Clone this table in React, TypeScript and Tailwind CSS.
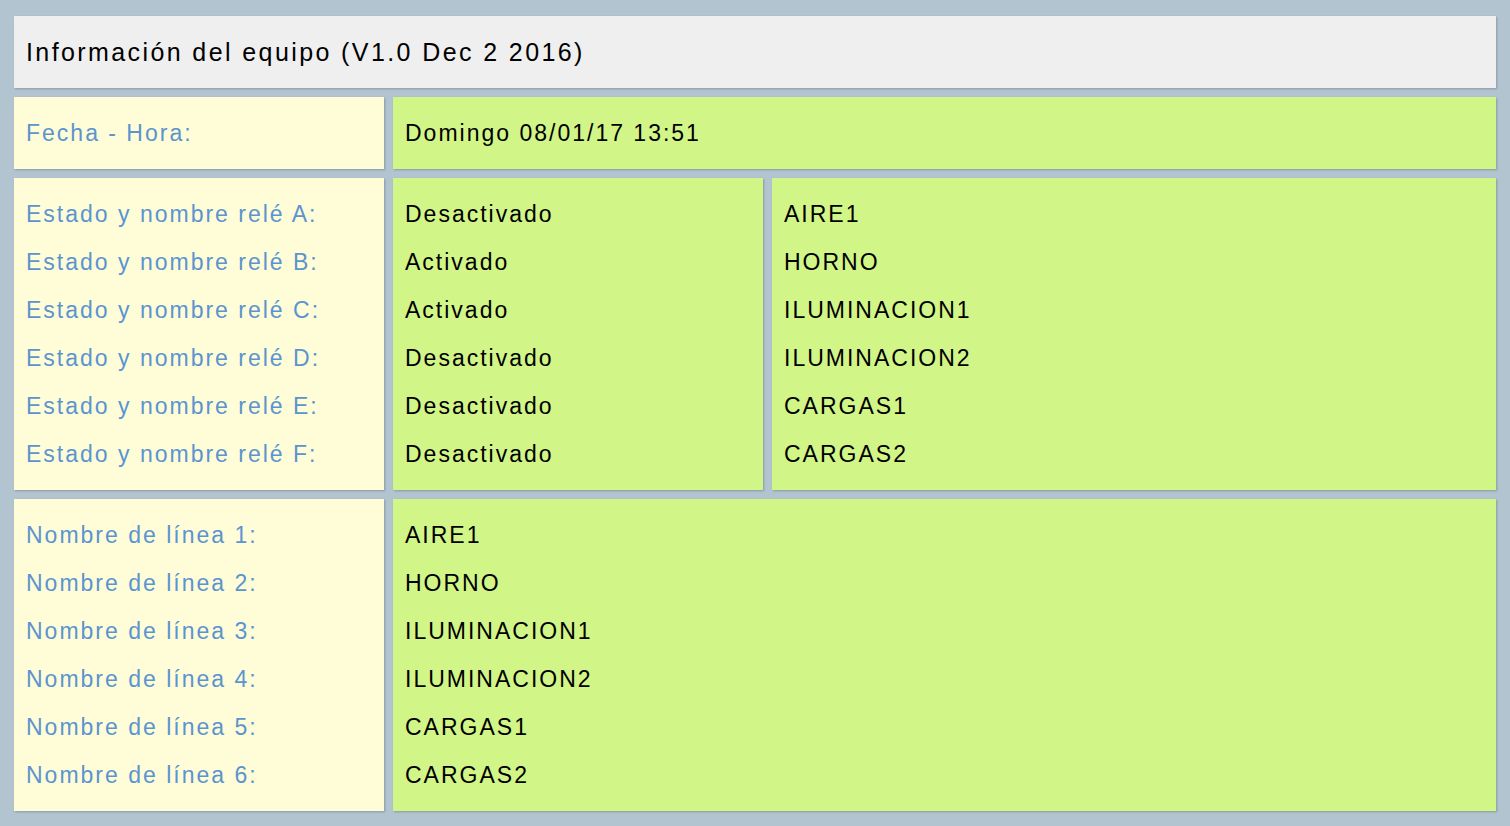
import React from 'react'

const RELAYS = [
  { id: 'A', estado: 'Desactivado', nombre: 'AIRE1' },
  { id: 'B', estado: 'Activado', nombre: 'HORNO' },
  { id: 'C', estado: 'Activado', nombre: 'ILUMINACION1' },
  { id: 'D', estado: 'Desactivado', nombre: 'ILUMINACION2' },
  { id: 'E', estado: 'Desactivado', nombre: 'CARGAS1' },
  { id: 'F', estado: 'Desactivado', nombre: 'CARGAS2' },
]

const LINES = ['AIRE1', 'HORNO', 'ILUMINACION1', 'ILUMINACION2', 'CARGAS1', 'CARGAS2']

const box = 'px-3 py-3 shadow-[1px_1px_2px_rgba(0,0,0,0.22)]'
const label = `${box} bg-[#fefdd7] text-[#5b94cf]`
const value = `${box} bg-[#d2f588] text-black`

export default function App() {
  return (
    <div
      className="min-h-[826px] bg-[#b2c4cf] px-[14px] pt-[16px] pb-[15px] flex flex-col gap-[9px] text-[23px] leading-[48px] tracking-[2px]"
      style={{ fontFamily: '"Liberation Sans", Arial, sans-serif' }}
    >
      <div className={`${box} bg-[#efefef] text-black text-[25px] tracking-[2.4px]`}>
        Información del equipo (V1.0 Dec 2 2016)
      </div>

      <div className="grid grid-cols-[370px_1fr] gap-[9px]">
        <div className={label}>Fecha - Hora:</div>
        <div className={value}>Domingo 08/01/17 13:51</div>
      </div>

      <div className="grid grid-cols-[370px_370px_1fr] gap-[9px]">
        <div className={label}>
          {RELAYS.map((r) => (
            <div key={r.id}>Estado y nombre relé {r.id}:</div>
          ))}
        </div>
        <div className={value}>
          {RELAYS.map((r) => (
            <div key={r.id}>{r.estado}</div>
          ))}
        </div>
        <div className={value}>
          {RELAYS.map((r) => (
            <div key={r.id}>{r.nombre}</div>
          ))}
        </div>
      </div>

      <div className="grid grid-cols-[370px_1fr] gap-[9px]">
        <div className={label}>
          {LINES.map((_, i) => (
            <div key={i}>Nombre de línea {i + 1}:</div>
          ))}
        </div>
        <div className={value}>
          {LINES.map((n, i) => (
            <div key={i}>{n}</div>
          ))}
        </div>
      </div>
    </div>
  )
}
